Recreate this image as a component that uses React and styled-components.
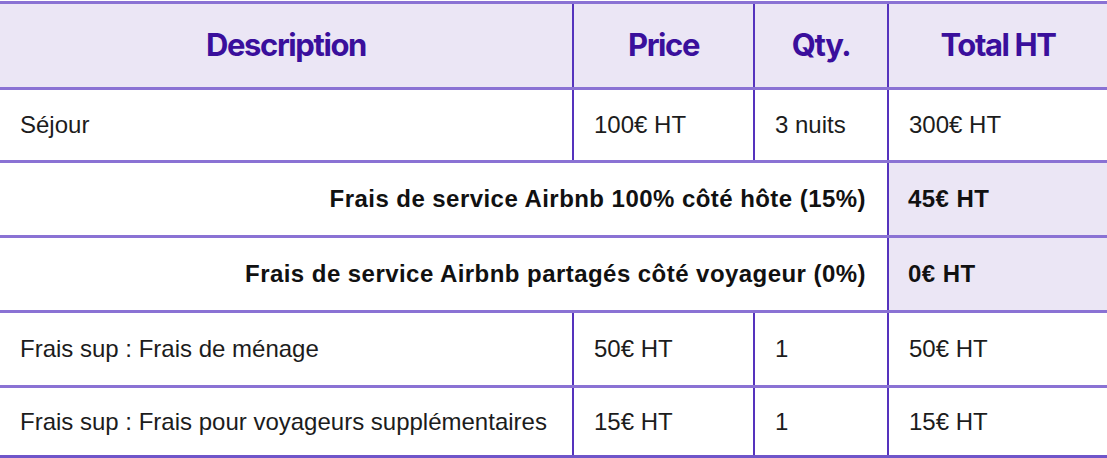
import React from 'react';
import styled, { createGlobalStyle } from 'styled-components';

const GlobalStyle = createGlobalStyle`
  html, body {
    margin: 0;
    padding: 0;
    background: #ffffff;
  }
  body {
    font-family: 'Liberation Sans', Arial, sans-serif;
  }
`;

// 견적 데이터
const lines = [
  { desc: 'Séjour', price: '100€ HT', qty: '3 nuits', total: '300€ HT', height: 73 },
  { fee: 'Frais de service Airbnb 100% côté hôte (15%)', total: '45€ HT' },
  { fee: 'Frais de service Airbnb partagés côté voyageur (0%)', total: '0€ HT' },
  { desc: 'Frais sup : Frais de ménage', price: '50€ HT', qty: '1', total: '50€ HT' },
  {
    desc: 'Frais sup : Frais pour voyageurs supplémentaires',
    price: '15€ HT',
    qty: '1',
    total: '15€ HT',
    last: true
  }
];

const App = () => {
  return (
    <Page>
      <GlobalStyle />
      <Table>
        <colgroup>
          <col style={{ width: 573 }} />
          <col style={{ width: 181 }} />
          <col style={{ width: 134 }} />
          <col style={{ width: 219 }} />
        </colgroup>
        <thead>
          <tr>
            <Head>Description</Head>
            <Head>Price</Head>
            <Head>Qty.</Head>
            <Head>Total HT</Head>
          </tr>
        </thead>
        <tbody>
          {lines.map((line, i) =>
            line.fee ? (
              <Row key={i}>
                <FeeLabel colSpan={3}>{line.fee}</FeeLabel>
                <FeeTotal>{line.total}</FeeTotal>
              </Row>
            ) : (
              <Row key={i} $last={line.last} $height={line.height}>
                <Cell>{line.desc}</Cell>
                <Cell>{line.price}</Cell>
                <Cell>{line.qty}</Cell>
                <Cell>{line.total}</Cell>
              </Row>
            )
          )}
        </tbody>
      </Table>
    </Page>
  );
};

const Page = styled.div`
  width: 1107px;
  padding-top: 1px;
`;

const Table = styled.table`
  width: 1107px;
  border-collapse: collapse;
  table-layout: fixed;
  border-top: 3px solid #8a72d4;
  border-bottom: 3px solid #6f55c9;
`;

const Head = styled.th`
  height: 81px;
  padding: 0 0 2px;
  background: #ebe6f5;
  color: #3a0f9c;
  font-family: Inter, 'Liberation Sans', sans-serif;
  font-weight: 700;
  font-size: 31px;
  letter-spacing: -1.4px;
  text-align: center;
  vertical-align: middle;
  border-bottom: 3px solid #8a72d4;
  border-left: 2px solid #5533bd;

  &:first-child {
    border-left: none;
  }
`;

const Row = styled.tr`
  height: ${(props) => (props.$last ? '70px' : `${props.$height || 75}px`)};
  border-bottom: ${(props) => (props.$last ? 'none' : '3px solid #8a72d4')};
`;

const Cell = styled.td`
  padding: 0 0 0 20px;
  font-size: 24px;
  color: #1c1c1c;
  vertical-align: middle;
  white-space: nowrap;
  border-left: 2px solid #5533bd;

  &:first-child {
    border-left: none;
  }
`;

const FeeLabel = styled.td`
  padding: 0 21px 0 0;
  text-align: right;
  font-weight: 700;
  font-size: 24px;
  letter-spacing: 0.45px;
  color: #111;
  vertical-align: middle;
  white-space: nowrap;
`;

const FeeTotal = styled.td`
  padding: 0 0 0 19px;
  background: #ebe6f5;
  font-weight: 700;
  font-size: 24px;
  letter-spacing: 0.45px;
  color: #111;
  vertical-align: middle;
  border-left: 2px solid #5533bd;
`;

export default App;
